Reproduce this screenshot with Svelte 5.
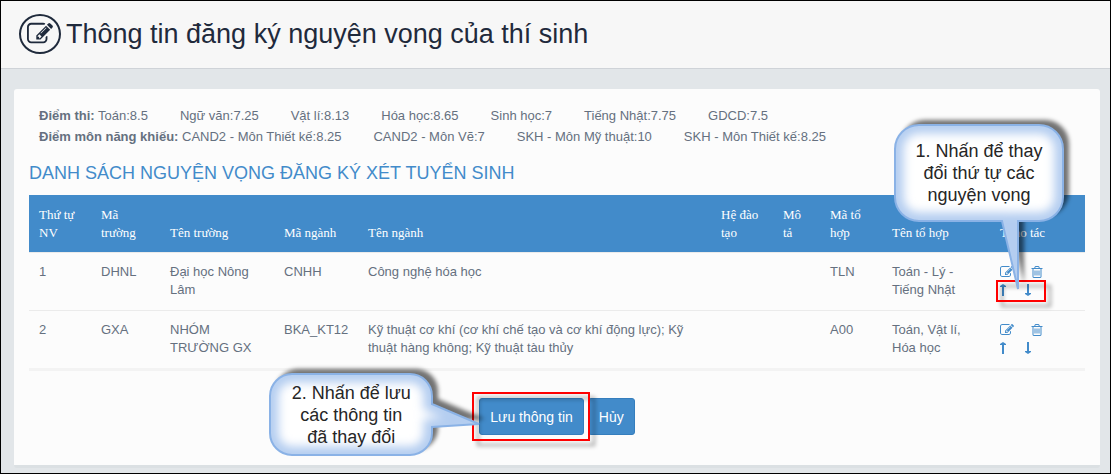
<script>
  const examScores = [
    'Toán:8.5',
    'Ngữ văn:7.25',
    'Vật lí:8.13',
    'Hóa học:8.65',
    'Sinh học:7',
    'Tiếng Nhật:7.75',
    'GDCD:7.5',
  ]

  const aptitudeScores = [
    'CAND2 - Môn Thiết kế:8.25',
    'CAND2 - Môn Vẽ:7',
    'SKH - Môn Mỹ thuật:10',
    'SKH - Môn Thiết kế:8.25',
  ]

  const columns = [
    { label: 'Thứ tự NV', size: 'order' },
    { label: 'Mã trường', size: 'school-code' },
    { label: 'Tên trường', size: 'school' },
    { label: 'Mã ngành', size: 'major-code' },
    { label: 'Tên ngành', size: 'major' },
    { label: 'Hệ đào tạo', size: 'order' },
    { label: 'Mô tả', size: 'note' },
    { label: 'Mã tổ hợp', size: 'order' },
    { label: 'Tên tổ hợp', size: 'group' },
    { label: 'Thao tác', size: 'tools' },
  ]

  let wishes = $state([
    {
      schoolCode: 'DHNL',
      school: 'Đại học Nông Lâm',
      majorCode: 'CNHH',
      major: 'Công nghệ hóa học',
      groupCode: 'TLN',
      group: 'Toán - Lý - Tiếng Nhật',
    },
    {
      schoolCode: 'GXA',
      school: 'NHÓM TRƯỜNG GX',
      majorCode: 'BKA_KT12',
      major: 'Kỹ thuật cơ khí (cơ khí chế tạo và cơ khí động lực); Kỹ thuật hàng không; Kỹ thuật tàu thủy',
      groupCode: 'A00',
      group: 'Toán, Vật lí, Hóa học',
    },
  ])

  const bubbleDown =
    'M24 0H144A24 24 0 0 1 168 24V72A24 24 0 0 1 144 96H123V164L107 96H24A24 24 0 0 1 0 72V24A24 24 0 0 1 24 0Z'
  const bubbleRight =
    'M22 0H140A22 22 0 0 1 162 22V30L209 50L162 53V59A22 22 0 0 1 140 81H22A22 22 0 0 1 0 59V22A22 22 0 0 1 22 0Z'

  function move(index, step) {
    const target = index + step
    if (target < 0 || target >= wishes.length) return
    const item = wishes[index]
    wishes[index] = wishes[target]
    wishes[target] = item
  }

  function remove(index) {
    wishes.splice(index, 1)
  }
</script>

{#snippet editIcon()}
  <svg viewBox="0 0 1792 1792" aria-hidden="true">
    <path d="M888 1184l116-116-152-152-116 116v56h96v96h56zm440-720q-16-16-33 1l-350 350q-17 17-1 33t33-1l350-350q17-17 1-33zm80 594v190q0 119-84.5 203.5t-203.5 84.5h-832q-119 0-203.5-84.5t-84.5-203.5v-832q0-119 84.5-203.5t203.5-84.5h832q63 0 117 25 15 7 18 23 3 17-9 29l-49 49q-14 14-32 8-23-6-45-6h-832q-66 0-113 47t-47 113v832q0 66 47 113t113 47h832q66 0 113-47t47-113v-126q0-13 9-22l64-64q15-15 35-7t20 29zm-96-738l288 288-672 672h-288v-288zm444 132l-92 92-288-288 92-92q28-28 68-28t68 28l152 152q28 28 28 68t-28 68z" />
  </svg>
{/snippet}

{#snippet trashIcon()}
  <svg viewBox="0 0 1792 1792" aria-hidden="true">
    <path d="M704 736v576q0 14-9 23t-23 9h-64q-14 0-23-9t-9-23v-576q0-14 9-23t23-9h64q14 0 23 9t9 23zm256 0v576q0 14-9 23t-23 9h-64q-14 0-23-9t-9-23v-576q0-14 9-23t23-9h64q14 0 23 9t9 23zm256 0v576q0 14-9 23t-23 9h-64q-14 0-23-9t-9-23v-576q0-14 9-23t23-9h64q14 0 23 9t9 23zm128 724v-948h-896v948q0 22 7 40.5t14.5 27 10.5 8.5h832q3 0 10.5-8.5t14.5-27 7-40.5zm-672-1076h448l-48-117q-7-9-17-11h-317q-10 2-17 11zm928 32v64q0 14-9 23t-23 9h-96v948q0 83-47 143.5t-113 60.5h-832q-66 0-113-58.5t-47-141.5v-952h-96q-14 0-23-9t-9-23v-64q0-14 9-23t23-9h309l70-167q15-37 54-63t79-26h320q40 0 79 26t54 63l70 167h309q14 0 23 9t9 23z" />
  </svg>
{/snippet}

{#snippet arrowIcon(down)}
  <svg class="arrow" viewBox="0 0 6 14" aria-hidden="true">
    {#if down}
      <path d="M2 1H4V10H6V11L3 13L0 11V10H2Z" />
    {:else}
      <path d="M2 13H4V4H6V3L3 1L0 3V4H2Z" />
    {/if}
  </svg>
{/snippet}

{#snippet bubble(id, shape)}
  <svg class="callout__shape" aria-hidden="true">
    <defs>
      <clipPath id="{id}-clip"><path d={shape} /></clipPath>
      <filter id="{id}-glow" x="-20%" y="-20%" width="140%" height="140%">
        <feGaussianBlur stdDeviation="5" />
      </filter>
      <filter id="{id}-shadow" x="-20%" y="-20%" width="140%" height="140%">
        <feGaussianBlur stdDeviation="2" />
      </filter>
    </defs>
    <path class="callout__shadow" d={shape} transform="translate(6 -5)" filter="url(#{id}-shadow)" />
    <path class="callout__fill" d={shape} />
    <g clip-path="url(#{id}-clip)">
      <path class="callout__glow" d={shape} filter="url(#{id}-glow)" />
    </g>
    <path class="callout__line" d={shape} />
  </svg>
{/snippet}

<div class="page">
  <header class="header">
    <span class="header__icon">{@render editIcon()}</span>
    <h1 class="header__title">Thông tin đăng ký nguyện vọng của thí sinh</h1>
  </header>

  <main class="card">
    <div class="scores">
      <div class="scores__row">
        <span><b>Điểm thi:</b> {examScores[0]}</span>
        {#each examScores.slice(1) as score}
          <span>{score}</span>
        {/each}
      </div>
      <div class="scores__row">
        <span><b>Điểm môn năng khiếu:</b> {aptitudeScores[0]}</span>
        {#each aptitudeScores.slice(1) as score}
          <span>{score}</span>
        {/each}
      </div>
    </div>

    <h2 class="card__title">DANH SÁCH NGUYỆN VỌNG ĐĂNG KÝ XÉT TUYỂN SINH</h2>

    <table class="wishes">
      <colgroup>
        {#each columns as column}
          <col class="col-{column.size}" />
        {/each}
      </colgroup>
      <thead>
        <tr>
          {#each columns as column}
            <th scope="col">{column.label}</th>
          {/each}
        </tr>
      </thead>
      <tbody>
        {#each wishes as wish, i}
          <tr>
            <td>{i + 1}</td>
            <td>{wish.schoolCode}</td>
            <td>{wish.school}</td>
            <td>{wish.majorCode}</td>
            <td>{wish.major}</td>
            <td></td>
            <td></td>
            <td>{wish.groupCode}</td>
            <td>{wish.group}</td>
            <td>
              <div class="tools">
                <button class="tool" aria-label="Sửa">{@render editIcon()}</button>
                <button class="tool" aria-label="Xóa" onclick={() => remove(i)}>{@render trashIcon()}</button>
              </div>
              <div class="tools tools--order" class:tools--marked={i === 0}>
                <button class="tool" aria-label="Lên" onclick={() => move(i, -1)}>{@render arrowIcon(false)}</button>
                <button class="tool" aria-label="Xuống" onclick={() => move(i, 1)}>{@render arrowIcon(true)}</button>
                {#if i === 0}
                  <div class="callout callout--order">
                    {@render bubble('order', bubbleDown)}
                    <p class="callout__text">1. Nhấn để thay đổi thứ tự các nguyện vọng</p>
                  </div>
                {/if}
              </div>
            </td>
          </tr>
        {/each}
      </tbody>
    </table>

    <div class="buttons">
      <div class="buttons__save">
        <button class="btn">Lưu thông tin</button>
        <div class="callout callout--save">
          {@render bubble('save', bubbleRight)}
          <p class="callout__text">2. Nhấn để lưu các thông tin đã thay đổi</p>
        </div>
      </div>
      <button class="btn">Hủy</button>
    </div>
  </main>
</div>

<style>
  :global(body) {
    background: #e2e6e9;
  }

  .page {
    box-sizing: border-box;
    min-height: 100vh;
    border: 1px solid #000;
    background: #e2e6e9;
    color: #65707f;
    font-family: Arial, 'Liberation Sans', sans-serif;
    font-size: 13px;
    line-height: 18px;
  }

  .header {
    display: flex;
    align-items: center;
    gap: 5px;
    box-sizing: border-box;
    height: 68px;
    padding: 0 18px 2px;
    border-bottom: 1px solid #cfd3d8;
    background: #f7f7f7;
    color: #1f2a3c;
  }

  .header__icon {
    display: flex;
    align-items: center;
    justify-content: center;
    box-sizing: border-box;
    width: 42px;
    height: 40px;
    border: 2px solid #1f2a3c;
    border-radius: 50%;
  }

  .header__icon svg {
    width: 26px;
    height: 26px;
    fill: currentColor;
  }

  .header__title {
    margin: 0;
    font-size: 27px;
    font-weight: 400;
    line-height: 32px;
  }

  .card {
    margin: 20px 10px 4px 13px;
    padding: 16px 15px 30px;
    border-bottom: 3px solid #dbe0e3;
    border-radius: 3px;
    background: #fcfcfc;
  }

  .scores {
    padding: 0 10px;
    line-height: 21px;
  }

  .scores__row {
    display: flex;
    flex-wrap: wrap;
    column-gap: 32px;
  }

  .card__title {
    margin: 16px 0 11px;
    color: #428bca;
    font-size: 18px;
    font-weight: 400;
    line-height: 21px;
  }

  .wishes {
    width: 100%;
    border-collapse: separate;
    border-spacing: 0;
    border-bottom: 3px solid #f3f3f3;
    table-layout: fixed;
  }

  .col-order {
    width: 62px;
  }

  .col-school-code {
    width: 69px;
  }

  .col-school {
    width: 114px;
  }

  .col-major-code {
    width: 84px;
  }

  .col-note {
    width: 47px;
  }

  .col-group {
    width: 108px;
  }

  .col-tools {
    width: 95px;
  }

  .wishes th,
  .wishes td {
    text-align: left;
  }

  .wishes th {
    padding: 11px 10px 10px;
    background: #428bca;
    color: #fff;
    font-family: 'Times New Roman', 'Liberation Serif', serif;
    font-weight: 400;
    vertical-align: bottom;
  }

  .wishes td {
    padding: 10px 10px 11px;
    border-top: 1px solid #ebebeb;
    vertical-align: top;
  }

  .tools {
    display: grid;
    grid-template-columns: 30px 18px;
    align-items: center;
    height: 18px;
  }

  .tools--order {
    grid-template-columns: 25px 18px;
  }

  .tool {
    display: flex;
    align-items: center;
    height: 18px;
    padding: 0;
    border: 0;
    background: none;
    cursor: pointer;
  }

  .tool svg {
    width: 14px;
    height: 14px;
    fill: #428bca;
  }

  .tool .arrow {
    width: 6px;
  }

  .tools--marked {
    position: relative;
  }

  .tools--marked::before,
  .buttons__save::before {
    content: '';
    position: absolute;
    border: 2px solid #f00;
    filter: drop-shadow(5px 5px 2px rgba(0, 0, 0, 0.4));
    pointer-events: none;
  }

  .tools--marked::before {
    inset: -1px auto -3px -4px;
    width: 46px;
  }

  .buttons {
    display: flex;
    justify-content: center;
    gap: 4px;
    padding-top: 27px;
  }

  .buttons__save {
    position: relative;
    z-index: 1;
  }

  .buttons__save::before {
    inset: -6px -6px -6px -7px;
  }

  .btn {
    box-sizing: border-box;
    height: 37px;
    padding: 0 10px;
    border: 1px solid #357ebd;
    border-radius: 3px;
    background: #428bca;
    color: #fff;
    font: inherit;
    font-size: 14px;
    cursor: pointer;
  }

  .callout {
    position: absolute;
    display: flex;
    align-items: center;
    justify-content: center;
    box-sizing: border-box;
    color: #262626;
    font-size: 18px;
    line-height: 22px;
    text-align: center;
  }

  .callout--order {
    bottom: 78px;
    left: -105px;
    width: 168px;
    height: 96px;
    padding: 0 18px;
  }

  .callout--save {
    top: -24px;
    right: 100%;
    width: 162px;
    height: 81px;
    margin-right: 47px;
    padding: 0 20px;
  }

  .callout__text {
    position: relative;
    margin: 0;
  }

  .callout__shape {
    position: absolute;
    inset: 0;
    width: 100%;
    height: 100%;
    overflow: visible;
    pointer-events: none;
  }

  .callout__shadow {
    fill: rgba(0, 0, 0, 0.55);
  }

  .callout__fill {
    fill: #fff;
  }

  .callout__glow {
    fill: none;
    stroke: #b4cdf0;
    stroke-width: 17;
  }

  .callout__line {
    fill: none;
    stroke: #8ab2e6;
    stroke-width: 2;
  }
</style>
